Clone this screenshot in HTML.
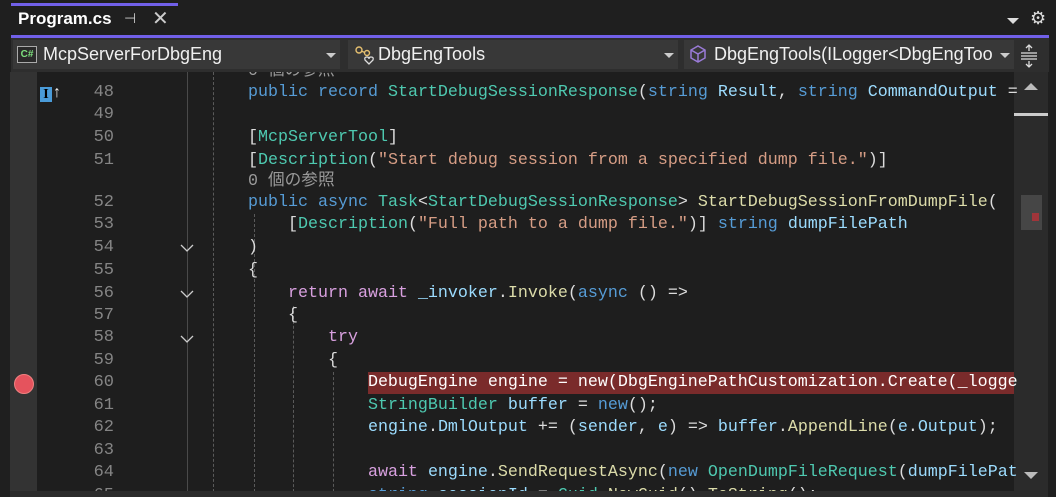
<!DOCTYPE html>
<html><head><meta charset="utf-8"><style>
*{margin:0;padding:0;box-sizing:border-box}
html,body{width:1056px;height:497px;overflow:hidden}
body{background:#1f1f1f;position:relative;font-family:"Liberation Sans","Noto Sans CJK JP",sans-serif}
.a{position:absolute}
.tab{left:11px;top:3px;width:167px;height:33px;background:#1f1f1f;border-top:3px solid #7160e8}
.tb{left:11px;top:35px;width:1038px;height:3px;background:#7160e8}
.bar{left:11px;top:38px;width:1038px;height:34px;background:#2e2e2e;z-index:5}
.dd{top:40px;height:29px;background:#383838;color:#f0f0f0;font-size:18px;line-height:29px;z-index:6}
.code{font-family:"Liberation Mono","Noto Sans CJK JP",monospace;font-size:16.67px;white-space:pre;color:#dcdcdc;left:248px;height:22px;line-height:22px}
.ln{font-family:"Liberation Mono",monospace;font-size:17px;color:#858585;left:60px;width:54px;text-align:right;line-height:22px}
.k{color:#569cd6}.t{color:#4ec9b0}.s{color:#d69d85}.m{color:#dcdcaa}.p{color:#9cdcfe}.c{color:#d8a0df}.g{color:#999}
.guide{top:72px;height:425px;width:0;border-left:1px dashed #5a5a5a}
</style></head><body>
<div class="a" style="left:0;top:0;width:1056px;height:36px;background:#1f1f1f"></div>
<div class="a tab"></div>
<div class="a" style="left:18px;top:9px;color:#fff;font-size:17px;font-weight:bold">Program.cs</div>
<div class="a" style="left:124px;top:10px;color:#ccc;font-size:14px">⊣</div>
<div class="a" style="left:152px;top:6px;color:#ccc;font-size:20px">✕</div>
<div class="a" style="left:1007px;top:18px;width:0;height:0;border-left:6px solid transparent;border-right:6px solid transparent;border-top:6px solid #ddd"></div>
<div class="a" style="left:1030px;top:8px;color:#ddd;font-size:18px">⚙</div>
<div class="a tb"></div>
<div class="a bar"></div>
<div class="a dd" style="left:13px;width:327px"><span style="position:absolute;left:4px;top:6px;width:20px;height:17px;border:1px solid #aaa;background:#2a2a2a;color:#7ee07e;font-size:10px;line-height:15px;text-align:center;font-weight:bold">C#</span><span style="position:absolute;left:30px">McpServerForDbgEng</span><span style="position:absolute;right:4px;top:13px;border-left:5px solid transparent;border-right:5px solid transparent;border-top:5px solid #ccc"></span></div>
<div class="a dd" style="left:348px;width:330px"><svg style="position:absolute;left:6px;top:4px" width="22" height="22" viewBox="0 0 22 22"><circle cx="5" cy="6" r="3" fill="none" stroke="#e6c070" stroke-width="1.4"/><circle cx="13" cy="9" r="2.5" fill="none" stroke="#e6c070" stroke-width="1.4"/><path d="M7 7 L11 8.5" stroke="#e6c070" stroke-width="1.4"/><path d="M15 20 L11 16 Q10 13 13 13 Q15 13 15 15 Q15 13 17 13 Q20 13 19 16 Z" fill="none" stroke="#ddd" stroke-width="1.3"/></svg><span style="position:absolute;left:30px">DbgEngTools</span><span style="position:absolute;right:4px;top:13px;border-left:5px solid transparent;border-right:5px solid transparent;border-top:5px solid #ccc"></span></div>
<div class="a dd" style="left:684px;width:330px"><svg style="position:absolute;left:4px;top:4px" width="20" height="20" viewBox="0 0 20 20"><path d="M10 2 L17 6 L17 14 L10 18 L3 14 L3 6 Z M3 6 L10 10 L17 6 M10 10 L10 18" fill="none" stroke="#9a7bd8" stroke-width="1.5"/></svg><span style="position:absolute;left:30px">DbgEngTools(ILogger&lt;DbgEngToo</span><span style="position:absolute;right:4px;top:13px;border-left:5px solid transparent;border-right:5px solid transparent;border-top:5px solid #ccc"></span></div>
<svg class="a" style="left:1019px;top:44px;z-index:7" width="20" height="24" viewBox="0 0 20 24"><path d="M2 12 H18 M2 9 H18 M2 15 H18" stroke="#ddd" stroke-width="1.3"/><path d="M10 2 V7 M7 4 L10 1 L13 4 M10 22 V17 M7 20 L10 23 L13 20" stroke="#ddd" stroke-width="1.3" fill="none"/></svg>
<!-- editor -->
<div class="a" style="left:10px;top:72px;width:27px;height:425px;background:#333"></div>
<div class="a" style="left:37px;top:72px;width:977px;height:425px;background:#1e1e1e"></div>
<div class="a" style="left:187px;top:72px;width:1px;height:425px;background:#4a4a4a"></div>
<div class="a guide" style="left:213px"></div>
<div class="a guide" style="left:254px;top:214px;height:283px"></div>
<div class="a guide" style="left:293px;top:306px;height:191px"></div>
<div class="a guide" style="left:333px;top:372px;height:125px"></div>
<div class="a" style="left:1014px;top:72px;width:34px;height:425px;background:#2b2b2b"></div>
<div class="a" style="left:1014px;top:113px;width:34px;height:3px;background:#ccc"></div>
<div class="a" style="left:1024px;top:83px;border-left:7px solid transparent;border-right:7px solid transparent;border-bottom:7px solid #bbb"></div>
<div class="a" style="left:1021px;top:195px;width:21px;height:35px;background:#464646"></div>
<div class="a" style="left:1032px;top:213px;width:7px;height:8px;background:#a0353a"></div>
<div class="a" style="left:1024px;top:472px;border-left:7px solid transparent;border-right:7px solid transparent;border-top:7px solid #bbb"></div>
<div class="a" style="left:1048px;top:72px;width:8px;height:425px;background:#1f1f1f"></div>
<div class="a" style="left:40px;top:87px;width:12px;height:15px;background:#4a9bd8;color:#000;font-family:'Liberation Serif',serif;font-size:14px;font-weight:bold;text-align:center;line-height:15px">I</div>
<div class="a" style="left:53px;top:84px;color:#eee;font-size:16px;font-weight:bold">↑</div>
<div class="a" style="left:14px;top:374px;width:20px;height:20px;border-radius:50%;background:#e5535d;border:1px solid #f08080"></div>
<div class="a" style="left:368px;top:372px;width:646px;height:22px;background:#7a2b2b"></div>

<div class="a ln" style="top:82px">48</div>
<div class="a ln" style="top:104px">49</div>
<div class="a ln" style="top:127px">50</div>
<div class="a ln" style="top:150px">51</div>
<div class="a ln" style="top:192px">52</div>
<div class="a ln" style="top:214px">53</div>
<div class="a ln" style="top:237px">54</div>
<div class="a ln" style="top:260px">55</div>
<div class="a ln" style="top:283px">56</div>
<div class="a ln" style="top:305px">57</div>
<div class="a ln" style="top:327px">58</div>
<div class="a ln" style="top:350px">59</div>
<div class="a ln" style="top:372px">60</div>
<div class="a ln" style="top:395px">61</div>
<div class="a ln" style="top:417px">62</div>
<div class="a ln" style="top:440px">63</div>
<div class="a ln" style="top:462px">64</div>
<div class="a ln" style="top:485px">65</div>
<svg class="a" style="left:179px;top:243px" width="16" height="10"><path d="M2 2 L8 8 L14 2" fill="none" stroke="#ccc" stroke-width="1.3"/></svg>
<svg class="a" style="left:179px;top:289px" width="16" height="10"><path d="M2 2 L8 8 L14 2" fill="none" stroke="#ccc" stroke-width="1.3"/></svg>
<svg class="a" style="left:179px;top:334px" width="16" height="10"><path d="M2 2 L8 8 L14 2" fill="none" stroke="#ccc" stroke-width="1.3"/></svg>

<div class="a code g" style="top:61px">0 個の参照</div>
<div class="a code" style="top:82px"><span class="k">public record</span> <span class="t">StartDebugSessionResponse</span>(<span class="k">string</span> <span class="p">Result</span>, <span class="k">string</span> <span class="p">CommandOutput</span> =</div>
<div class="a code" style="top:127px">[<span class="t">McpServerTool</span>]</div>
<div class="a code" style="top:150px">[<span class="t">Description</span>(<span class="s">"Start debug session from a specified dump file."</span>)]</div>
<div class="a code g" style="top:171px">0 個の参照</div>
<div class="a code" style="top:192px"><span class="k">public async</span> <span class="t">Task</span>&lt;<span class="t">StartDebugSessionResponse</span>&gt; <span class="m">StartDebugSessionFromDumpFile</span>(</div>
<div class="a code" style="top:214px">    [<span class="t">Description</span>(<span class="s">"Full path to a dump file."</span>)] <span class="k">string</span> <span class="p">dumpFilePath</span></div>
<div class="a code" style="top:237px">)</div>
<div class="a code" style="top:260px">{</div>
<div class="a code" style="top:283px">    <span class="c">return await</span> <span class="p">_invoker</span>.<span class="m">Invoke</span>(<span class="k">async</span> () =&gt;</div>
<div class="a code" style="top:305px">    {</div>
<div class="a code" style="top:327px">        <span class="c">try</span></div>
<div class="a code" style="top:350px">        {</div>
<div class="a code" style="top:372px;color:#fff">            DebugEngine engine = new(DbgEnginePathCustomization.Create(_logge</div>
<div class="a code" style="top:395px">            <span class="t">StringBuilder</span> <span class="p">buffer</span> = <span class="k">new</span>();</div>
<div class="a code" style="top:417px">            <span class="p">engine</span>.<span class="p">DmlOutput</span> += (<span class="p">sender</span>, <span class="p">e</span>) =&gt; <span class="p">buffer</span>.<span class="m">AppendLine</span>(<span class="p">e</span>.<span class="p">Output</span>);</div>
<div class="a code" style="top:462px">            <span class="c">await</span> <span class="p">engine</span>.<span class="m">SendRequestAsync</span>(<span class="k">new</span> <span class="t">OpenDumpFileRequest</span>(<span class="p">dumpFilePat</span></div>
<div class="a code" style="top:485px">            <span class="k">string</span> <span class="p">sessionId</span> = <span class="t">Guid</span>.<span class="m">NewGuid</span>().<span class="m">ToString</span>();</div>
<div class="a" style="left:10px;top:491px;width:1004px;height:6px;background:#2b2b2b"></div>
</body></html>
